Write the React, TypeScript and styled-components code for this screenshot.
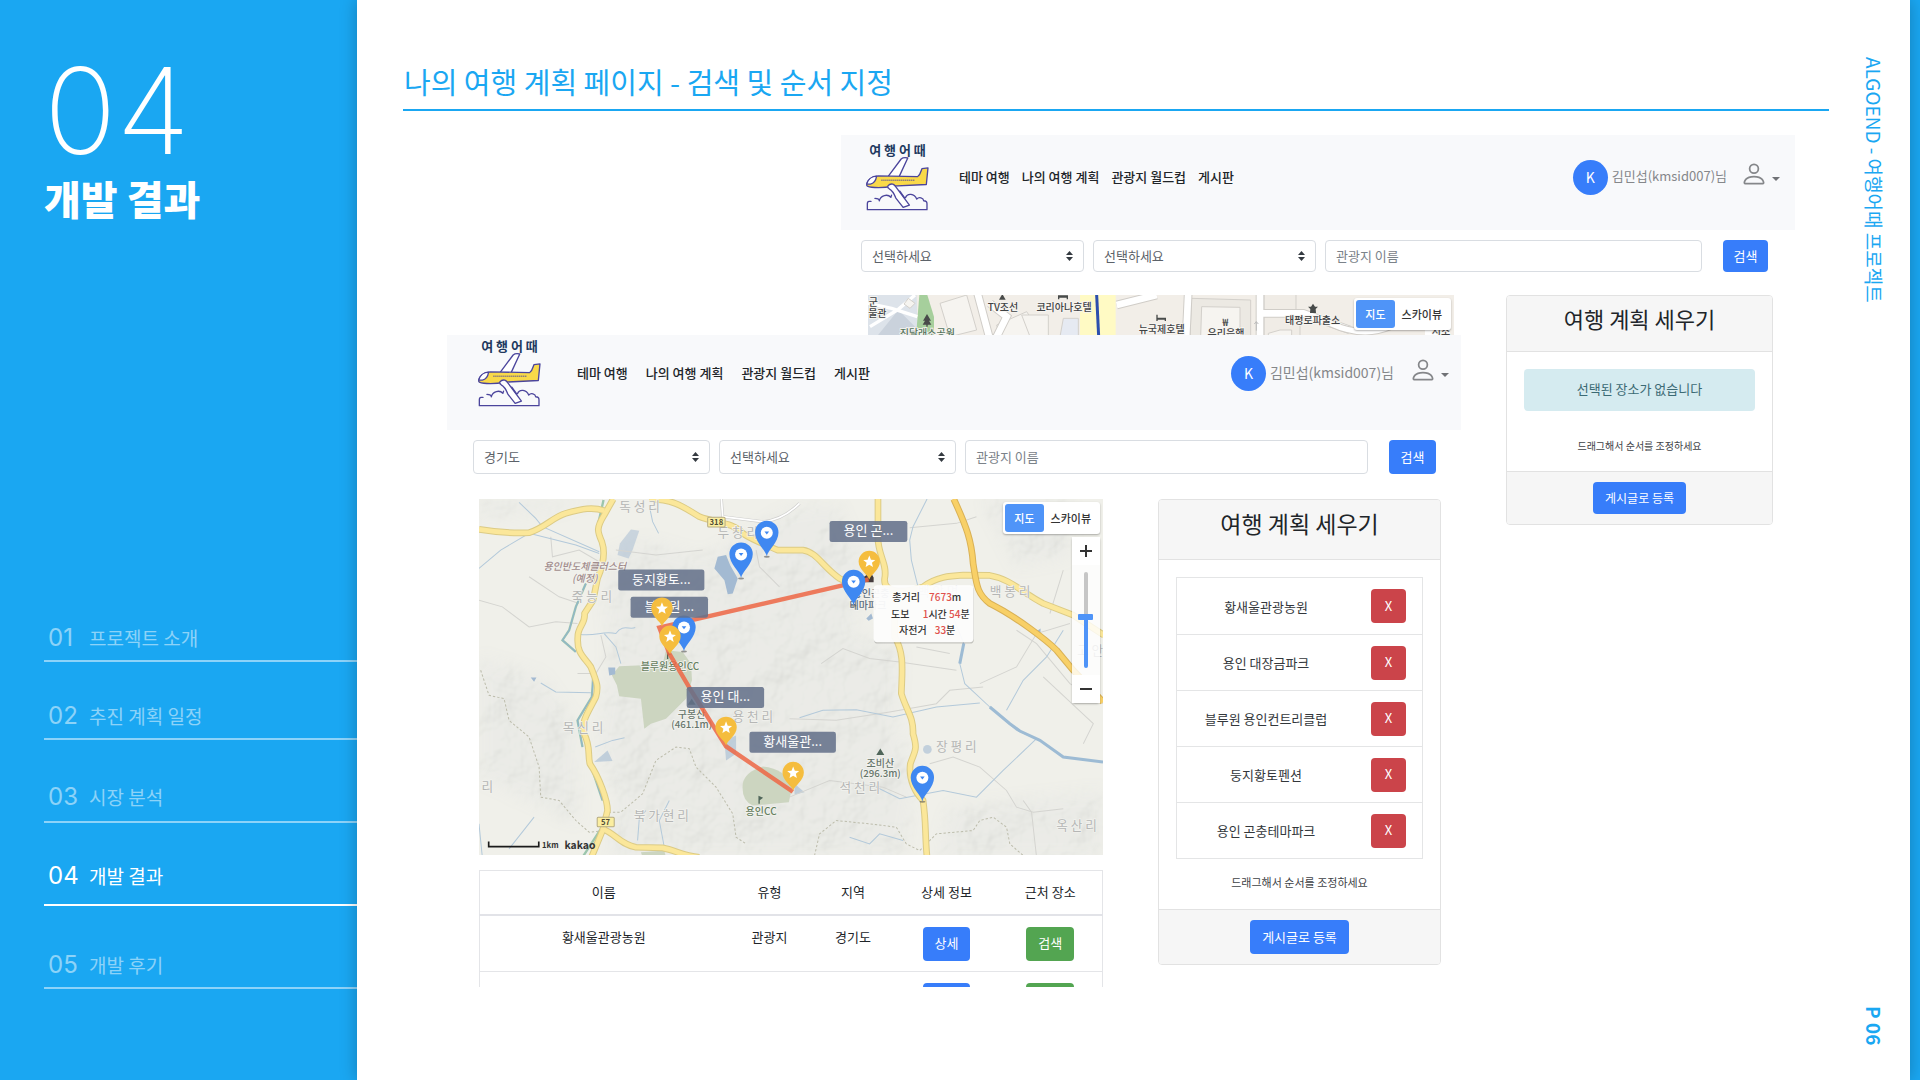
import React from "react";
import styled, { createGlobalStyle } from "styled-components";

const BLUE = "#1aa7f2";
const PRIMARY = "#377dfa";
const SANS = `"Noto Sans CJK KR", "Noto Sans", sans-serif`;
const LATIN = `Inter, "Noto Sans CJK KR", sans-serif`;

const GlobalStyle = createGlobalStyle`
  *, *::before, *::after { box-sizing: border-box; }
  body { margin: 0; background: ${BLUE}; font-family: ${SANS}; color: #212529; }
  h1, h2, h3, p, ul, ol { margin: 0; padding: 0; font-weight: inherit; }
  ul, ol { list-style: none; }
  button, input, select { font-family: inherit; margin: 0; }
  a { color: inherit; text-decoration: none; }
`;

/* ---------- slide frame ---------- */

const Slide = styled.div`
  display: grid;
  grid-template-columns: 357px minmax(0, 1fr);
  min-height: 100vh;
  padding-right: 10px;
  background: ${BLUE};
`;

const Sidebar = styled.aside`
  display: flex;
  flex-direction: column;
  justify-content: space-between;
  padding: 56px 0 91px 44px;
  color: #fff;
`;

const ChapterNumber = styled.p`
  font: 200 120px/110px ${LATIN};
`;

const ChapterTitle = styled.h1`
  font-size: 40px;
  line-height: 64px;
  font-weight: 900;
`;

const Chapters = styled.ol`
  display: flex;
  flex-direction: column;
`;

const Chapter = styled.li<{ $active?: boolean; $height: number; $lift: number }>`
  height: ${(p) => p.$height}px;
  display: flex;
  flex-direction: column;
  justify-content: flex-end;
  border-bottom: 2px solid ${(p) => (p.$active ? "#fff" : "rgba(255, 255, 255, 0.5)")};
  color: ${(p) => (p.$active ? "#fff" : "rgba(255, 255, 255, 0.5)")};
  padding-bottom: ${(p) => p.$lift}px;
`;

const ChapterLink = styled.a`
  display: grid;
  grid-template-columns: 41px 1fr;
  align-items: center;
  padding-left: 4px;
  font-size: 19px;
  line-height: 28px;
`;

const ChapterIndex = styled.span`
  font: 400 24px/28px ${LATIN};
`;

const Main = styled.main`
  display: grid;
  grid-template-columns: minmax(0, 1fr) 81px;
  padding-left: 46px;
  background: #fff;
  box-shadow: 0 0 16px rgba(0, 0, 0, 0.25);
`;

const Content = styled.section`
  display: flex;
  flex-direction: column;
`;

const Heading = styled.h2`
  margin-top: 59px;
  padding-left: 1px;
  height: 52px;
  border-bottom: 2px solid ${BLUE};
  color: ${BLUE};
  font-size: 29px;
  line-height: 44px;
`;

const Rail = styled.div`
  display: flex;
  flex-direction: column;
  justify-content: space-between;
  align-items: center;
  padding: 57px 0 35px 8px;
  color: ${BLUE};
`;

const RailText = styled.span<{ $bold?: boolean }>`
  writing-mode: vertical-rl;
  text-orientation: sideways;
  font-size: 19px;
  line-height: 28px;
  font-weight: ${(p) => (p.$bold ? 700 : 400)};
`;

const Stage = styled.div`
  display: grid;
  grid-template-columns: 44fr 394fr 620fr 334fr 34fr;
  grid-template-rows: 200px auto;
  margin-top: 24px;
`;

/* ---------- captured windows ---------- */

const Win = styled.article<{ $front?: boolean }>`
  grid-column: ${(p) => (p.$front ? "2 / 4" : "3 / 5")};
  grid-row: ${(p) => (p.$front ? "2" : "1 / 3")};
  align-self: start;
  background: #fff;
  z-index: ${(p) => (p.$front ? 1 : 0)};
`;

const NavBar = styled.header<{ $front?: boolean }>`
  display: flex;
  align-items: center;
  height: 95px;
  padding: ${(p) => (p.$front ? "4px 12px 23px 30px" : "8px 15px 19px 24px")};
  background: #f8f9fb;
`;

const Logo = styled.a`
  width: 65px;
  display: flex;
  flex-direction: column;
  align-items: center;
  color: #22395f;
  font-size: 13px;
  line-height: 13px;
  font-weight: 700;
  white-space: nowrap;
`;

const Menu = styled.nav<{ $front?: boolean }>`
  flex: 1;
  display: flex;
  gap: ${(p) => (p.$front ? 18 : 12)}px;
  margin-left: ${(p) => (p.$front ? 35 : 29)}px;
  font-size: 13px;
  line-height: 20px;
  font-weight: 500;
`;

const Avatar = styled.span`
  width: 35px;
  height: 35px;
  border-radius: 50%;
  background: ${PRIMARY};
  color: #fff;
  display: grid;
  place-items: center;
  font-size: 14px;
`;

const UserName = styled.span<{ $front?: boolean }>`
  margin: 0 ${(p) => (p.$front ? 15 : 13)}px 2px 4px;
  color: #85878a;
  font-size: ${(p) => (p.$front ? 14 : 13)}px;
  line-height: 20px;
`;

const UserMenu = styled.button`
  display: flex;
  align-items: center;
  gap: 4px;
  margin-bottom: 6px;
  padding: 0;
  border: 0;
  background: none;
  color: #85878a;
`;

const CaretIcon = styled.svg`
  margin-top: 10px;
`;

const SearchForm = styled.form<{ $front?: boolean }>`
  display: grid;
  grid-template-columns: ${(p) => (p.$front ? "237px 237px 1fr 47px" : "223px 223px 1fr 45px")};
  column-gap: 9px;
  padding: ${(p) => (p.$front ? "10px 25px 0 26px" : "10px 27px 0 20px")};
`;

const Field = styled.label`
  position: relative;
  display: block;
  min-width: 0;
`;

const fieldHeight = (front?: boolean) => (front ? 34 : 32);

const Select = styled.select<{ $front?: boolean }>`
  appearance: none;
  display: block;
  width: 100%;
  height: ${(p) => fieldHeight(p.$front)}px;
  padding: 0 24px 2px 10px;
  border: 1px solid #d9dde2;
  border-radius: 4px;
  background: #fff;
  color: #5c6269;
  font-size: 13px;
`;

const SelectArrows = styled.svg`
  position: absolute;
  right: 11px;
  top: 50%;
  margin-top: -5px;
  pointer-events: none;
`;

const TextInput = styled.input<{ $front?: boolean }>`
  display: block;
  width: 100%;
  height: ${(p) => fieldHeight(p.$front)}px;
  padding: 0 10px 2px;
  border: 1px solid #d9dde2;
  border-radius: 4px;
  font-size: 13px;
  &::placeholder { color: #7b8289; opacity: 1; }
`;

const NameField = styled(Field)`
  margin-right: 12px;
`;

const Button = styled.button<{ $tone?: string; $small?: boolean }>`
  min-width: 35px;
  height: ${(p) => (p.$small ? 32 : 34)}px;
  padding: 0 12px 1px;
  border: 0;
  border-radius: 4px;
  background: ${(p) => p.$tone || PRIMARY};
  color: #fff;
  font-size: ${(p) => (p.$small ? 12 : 13)}px;
  line-height: 20px;
  white-space: nowrap;
`;

const SearchButton = styled(Button)<{ $front?: boolean }>`
  padding: 0;
  height: ${(p) => fieldHeight(p.$front)}px;
`;

const Body = styled.div<{ $front?: boolean }>`
  display: grid;
  grid-template-columns: minmax(0, 1fr) ${(p) => (p.$front ? 283 : 267)}px;
  column-gap: ${(p) => (p.$front ? 55 : 52)}px;
  align-items: start;
  padding: ${(p) => (p.$front ? "25px 20px 0 32px" : "23px 22px 0 27px")};
`;

/* ---------- plan card ---------- */

const Card = styled.section`
  border: 1px solid #e2e2e2;
  border-radius: 4px;
  background: #fff;
  text-align: center;
  overflow: hidden;
`;

const CardTitle = styled.h3<{ $front?: boolean }>`
  height: ${(p) => (p.$front ? 60 : 56)}px;
  padding-top: ${(p) => (p.$front ? 6 : 5)}px;
  border-bottom: 1px solid #e2e2e2;
  background: #f6f6f6;
  font-size: ${(p) => (p.$front ? 23 : 22)}px;
  line-height: 34px;
`;

const CardBody = styled.div`
  padding: 17px 17px 0;
`;

const Notice = styled.p`
  height: 42px;
  border-radius: 4px;
  background: #d5ebf0;
  color: #3b6a74;
  font-size: 13px;
  line-height: 40px;
`;

const Hint = styled.p<{ $front?: boolean }>`
  padding: ${(p) => (p.$front ? "12px 0 16px" : "24px 0 14px")};
  color: #3e4246;
  font-size: ${(p) => (p.$front ? 11 : 10)}px;
  line-height: 22px;
`;

const CardFooter = styled.footer`
  padding: 10px;
  border-top: 1px solid #e2e2e2;
  background: #f6f6f6;
`;

const PlaceList = styled.ul`
  border: 1px solid #e4e5e6;
`;

const Place = styled.li`
  display: grid;
  grid-template-columns: 1fr 67px;
  align-items: center;
  justify-items: center;
  height: 56px;
  font-size: 13px;
  color: #33373b;
  & + & { border-top: 1px solid #e4e5e6; }
`;

/* ---------- results table ---------- */

const TableClip = styled.div`
  max-height: 117px;
  margin-top: 15px;
  overflow: hidden;
`;

const Table = styled.table`
  width: 100%;
  table-layout: fixed;
  border-collapse: collapse;
  border: 1px solid #e4e5e8;
  font-size: 13px;
  line-height: 20px;
  text-align: center;
  th { height: 44px; padding: 0; font-weight: 400; border-bottom: 2px solid #e2e3e8; }
  td { height: 57px; padding: 11px 0 0; vertical-align: top; border-bottom: 1px solid #e4e5e8; }
`;

/* ---------- map ---------- */

const MapBox = styled.div<{ $front?: boolean }>`
  position: relative;
  height: ${(p) => (p.$front ? 356 : 200)}px;
  overflow: hidden;
  background: #eeeee9;
`;

const MapSvg = styled.svg`
  display: block;
  width: 100%;
  height: 100%;
`;

const MapTypes = styled.div`
  position: absolute;
  top: 3px;
  right: 3px;
  display: flex;
  padding: 2px;
  border-radius: 3px;
  background: #fff;
  box-shadow: 0 1px 2px rgba(0, 0, 0, 0.3);
`;

const MapType = styled.button<{ $on?: boolean }>`
  height: 28px;
  padding: 0 ${(p) => (p.$on ? 9 : 7)}px 1px;
  border: 0;
  border-radius: 3px;
  background: ${(p) => (p.$on ? "#4f94f8" : "#fff")};
  color: ${(p) => (p.$on ? "#fff" : "#333")};
  font-size: 11px;
  font-weight: 500;
`;

const ZoomBox = styled.div`
  position: absolute;
  top: 38px;
  right: 3px;
  width: 28px;
  display: flex;
  flex-direction: column;
  align-items: center;
  border-radius: 3px;
  background: rgba(255, 255, 255, 0.8);
  box-shadow: 0 1px 2px rgba(0, 0, 0, 0.3);
`;

const ZoomButton = styled.button`
  width: 28px;
  height: 28px;
  padding: 0;
  border: 0;
  background: #fff;
  display: grid;
  place-items: center;
`;

const ZoomSlider = styled.input`
  appearance: none;
  writing-mode: vertical-lr;
  direction: rtl;
  width: 15px;
  height: 96px;
  margin: 7px 0;
  background: transparent;
  &::-webkit-slider-runnable-track {
    width: 4px;
    border-radius: 2px;
    background: linear-gradient(#c6c6c6 47%, #4f94f8 47%);
  }
  &::-webkit-slider-thumb {
    appearance: none;
    width: 15px;
    height: 6px;
    margin-left: -6px;
    border-radius: 1px;
    background: #4f94f8;
  }
`;

/* ---------- drawings ---------- */

const Plane = () => (
  <svg width="65" height="55" viewBox="104 77 194 166" fill="none" stroke="#4b459c" strokeWidth="4" strokeLinejoin="round" strokeLinecap="round">
    <path d="M174 137 L212 86 Q219 80 232 83 L207 137" fill="#fff" />
    <path d="M108 165 C108 150 124 138 142 137 L262 139 C271 134 271 122 275 115 L293 113 L288 163 L186 168 C160 174 124 174 110 168 Z" fill="#f9d949" />
    <path d="M108 162 C112 148 124 138 138 138 C136 150 130 160 119 162 Z" fill="#fff" />
    <path d="M152 150 H252" strokeWidth="3" strokeDasharray="4 2" strokeLinecap="butt" />
    <path d="M121 214 H115 Q110 214 110 221 V239 H290 V221 Q290 212 280 212 C279 203 266 199 259 207 C252 190 231 188 225 203" />
    <path d="M133 205 C140 205 146 207 146 212 C150 196 171 190 181 202 L183 195" />
    <path d="M172 167 Q178 160 187 162 Q192 164 196 170 L237 225 L218 232 L196 204 Q188 182 176 176 Q170 172 172 167 Z" fill="#fff" />
    <path d="M208 183 L222 203" />
  </svg>
);

const PersonIcon = () => (
  <svg width="28" height="28" viewBox="0 0 16 16" fill="currentColor" aria-hidden="true">
    <path d="M8 8a3 3 0 1 0 0-6 3 3 0 0 0 0 6m2-3a2 2 0 1 1-4 0 2 2 0 0 1 4 0m4 8c0 1-1 1-1 1H3s-1 0-1-1 1-4 6-4 6 3 6 4m-1-.004c-.001-.246-.154-.986-.832-1.664C11.516 10.68 10.289 10 8 10s-3.516.68-4.168 1.332c-.678.678-.83 1.418-.832 1.664z" />
  </svg>
);

const Caret = () => (
  <CaretIcon width="8" height="4" viewBox="0 0 8 4" fill="#707276" aria-hidden="true">
    <path d="M0 0H8L4 4Z" />
  </CaretIcon>
);

const villages: [number, number, string][] = [
  [511, 64, "독 성 리"], [805, 141, "두 창 리"], [368, 334, "죽 능 리"], [342, 725, "목 신 리"], [55, 903, "리"],
  [576, 987, "북 가 현 리"], [850, 692, "용 천 리"], [1171, 904, "석 천 리"], [1460, 783, "장 평 리"],
  [1621, 319, "백 봉 리"], [1405, 319, "백 암 면"], [1820, 1017, "옥 산 리"], [1860, 494, "고 안"],
];

const bluePins: [number, number][] = [[892, 198], [815, 263], [644, 482], [1152, 345], [1358, 932]];
const starPins: [number, number][] = [[578, 408], [602, 492], [770, 765], [971, 900], [1199, 268]];
const chips: [number, number, number, string][] = [
  [447, 238, 258, "둥지황토..."], [484, 320, 232, "블루원 ..."], [652, 590, 232, "용인 대..."],
  [840, 724, 259, "황새울관..."], [1080, 93, 233, "용인 곤..."],
];

const yellowRoads = [
  "M30 118 C90 128 130 130 180 128 C230 112 250 82 290 70 C340 56 370 50 405 62",
  "M432 27 L405 75 C380 115 385 125 398 155 C410 190 400 230 385 265 L372 330 L346 370 C350 400 325 410 326 440 C322 490 345 500 365 530 C385 580 388 590 380 620 C355 670 336 690 345 730 C365 770 355 790 362 820 C390 860 415 930 415 960 L400 1020 L366 1102",
  "M400 1015 C440 1030 450 1060 500 1070 L580 1072 C620 1080 640 1095 690 1100",
  "M540 27 C620 30 640 50 690 80 C740 100 790 95 820 130 C850 150 890 165 925 180 L1000 180 C1040 185 1060 230 1110 265 L1170 295",
  "M1225 27 V130 C1220 190 1255 220 1245 265 C1240 310 1300 310 1360 290 C1400 260 1440 257 1480 255 L1560 256 C1620 265 1660 310 1720 340 L1810 375 L1902 435",
  "M1275 380 V440 C1305 490 1297 540 1295 610 C1310 660 1332 680 1330 730 C1345 780 1335 780 1322 820 C1315 870 1340 910 1360 930 C1370 1000 1365 1030 1372 1100",
];

const streams = [
  "M30 235 L95 180 L180 130 L320 165 L390 190",
  "M150 37 L200 85 L220 110 L390 185",
  "M330 432 C380 440 400 420 440 430 C460 400 480 420 498 412",
  "M405 430 L440 470 L455 520",
  "M215 578 L260 605 L365 607",
  "M378 770 L430 750 L466 742",
  "M540 47 L550 95 L568 130",
  "M1372 27 L1330 110 L1320 150 L1325 210 L1345 290 M1450 380 L1482 460 L1470 520 L1485 580 L1560 650 L1640 720 L1710 750 L1780 800 L1899 815",
  "M990 682 L1060 660 L1160 658 L1270 680 L1400 650 L1530 638",
  "M1200 880 L1290 925 L1420 900 L1520 920 L1600 840 L1700 745",
  "M1610 660 L1660 570 L1730 500 L1780 420",
  "M30 1000 L40 1100 M120 1075 L195 980",
  "M505 1050 L510 985 L530 960 M585 1070 L570 990 L600 930",
  "M1140 1040 L1200 1060 L1230 1030 L1300 1050",
];

const lanes = [
  "M30 330 L100 350 L180 410 L260 395 L325 400",
  "M245 140 L250 200 L330 180 L390 215 M180 260 L270 320 L330 340",
  "M395 435 L410 500 L380 550 L325 550",
  "M440 180 L560 195 L700 180 M860 180 L870 230 L930 290",
  "M1320 113 L1460 100 L1520 80 M1490 120 L1510 200",
  "M1055 520 L1120 475 L1200 505 L1290 515 L1460 540",
  "M1340 470 L1440 490 M1530 580 L1640 530 L1700 430 L1800 400",
  "M960 685 L1100 690 L1260 665 L1400 640 L1440 600 L1540 590",
  "M1380 820 L1450 800 L1530 830 L1610 900 L1640 950 L1690 965 L1780 955",
  "M960 920 L1080 870 L1240 890 L1310 920 M1660 930 L1685 965 L1700 1100",
  "M1780 240 L1740 370 M1640 420 L1700 460 L1800 580 L1899 640",
  "M1720 560 L1870 700 L1840 760",
];

const RouteMap = () => (
  <MapSvg viewBox="30 27 1869 1070" preserveAspectRatio="xMinYMin slice" fontFamily={`"Noto Sans CJK KR", sans-serif`} role="img" aria-label="여행 경로 지도">
    <defs>
      <filter id="relief" x="0" y="0" width="100%" height="100%">
        <feTurbulence type="fractalNoise" baseFrequency="0.008" numOctaves="4" seed="7" result="n" />
        <feDiffuseLighting in="n" surfaceScale="34" diffuseConstant="1.1" lightingColor="#fff">
          <feDistantLight azimuth="225" elevation="58" />
        </feDiffuseLighting>
      </filter>
      <filter id="soft"><feGaussianBlur stdDeviation="22" /></filter>
      <mask id="hills">
        <g fill="#fff" filter="url(#soft)">
          <path d="M400 200 L520 150 L700 200 L960 60 L1100 40 L1200 250 L1150 420 L1290 480 L1280 700 L1340 860 L1300 1100 L420 1100 L440 930 L380 760 L420 500 Z" />
          <path d="M30 500 L220 560 L320 700 L330 1000 L30 860 Z" />
          <path d="M1440 950 L1900 900 V1100 H1400 Z" />
          <path d="M1540 27 H1800 V200 L1640 230 Z" />
          <path d="M30 27 H380 L260 60 L30 90 Z" />
        </g>
      </mask>
    </defs>
    <rect x="30" y="27" width="1869" height="1071" fill="#f0f0ea" />
    <g mask="url(#hills)">
      <rect x="30" y="27" width="1869" height="1071" fill="#e9eae5" />
      <rect x="30" y="27" width="1869" height="1071" filter="url(#relief)" opacity="0.09" />
    </g>
    <g fill="#ccd5c0">
      <path d="M428 555 L450 528 L520 525 L580 520 L590 480 L640 485 L665 520 L668 570 L650 625 L590 685 L545 700 L525 715 L515 625 L450 618 L443 585 Z" />
      <path d="M820 880 Q825 845 880 828 Q950 835 968 890 L958 935 L850 945 Q815 930 820 880 Z" />
      <path d="M515 1085 L585 1080 L590 1100 H520 Z" />
    </g>
    <g fill="#a3bad2">
      <path d="M735 235 L745 200 L770 195 L782 225 L805 265 L790 310 L775 312 L765 270 Z" />
      <path d="M452 160 L485 118 L510 122 L490 180 L478 205 L445 195 Z" opacity="0.5" />
      <path d="M417 532 H438 V552 L420 556 Z M185 562 H202 L195 574 Z" />
      <path d="M765 750 L800 735 L800 790 L770 810 Z M975 880 L1005 905 L975 912 Z M375 815 L415 780 L430 812 Z" opacity="0.6" />
      <circle cx="1373" cy="777" r="13" opacity="0.6" />
      <path d="M1190 385 L1205 370 L1210 385 L1197 392 Z M1697 425 L1712 415 L1712 440 Z" />
    </g>
    <g fill="none" stroke="#d4d4d0" strokeWidth="3">
      {lanes.map((d) => <path key={d} d={d} />)}
    </g>
    <path d="M990 40 Q940 90 880 95 L760 80 L756 27" fill="none" stroke="#cfcfcd" strokeWidth="9" />
    <path d="M990 40 Q940 90 880 95 L760 80 L756 27" fill="none" stroke="#fff" strokeWidth="5" />
    <g fill="none" stroke="#b3c9da" strokeWidth="3">
      {streams.map((d) => <path key={d} d={d} />)}
    </g>
    <path d="M1560 650 L1620 700 L1650 722 L1710 750 L1780 800 L1899 815 M1482 460 L1470 520" fill="none" stroke="#9dbbd4" strokeWidth="9" />
    <path d="M403 30 L385 110 M350 280 L320 350 L300 420 L280 450 L320 485 M372 560 L368 620 L325 690 L340 770 M370 840 L400 930 M395 1015 L340 1100" fill="none" stroke="#9cc6ad" strokeWidth="7" />
    <path d="M350 280 L320 350 L300 420 L280 450 L320 485 M372 560 L368 620 L325 690 L340 770 M370 840 L400 930" fill="none" stroke="#8fb2cf" strokeWidth="3" />
    <path d="M35 540 L60 615 L105 625 L120 690 L180 740 L210 830 L215 920 L270 930 L320 990 L360 1025 L410 1020 M405 965 L455 965 L520 910 L560 810 L620 770 L660 775 L680 830 L740 890 L790 970 L800 1040 L830 1060 M1035 1095 L1050 1030 L1100 990 L1200 1000 L1280 1010 L1310 1060 L1350 1080 L1400 1030 L1510 1020 L1530 990 L1570 980 L1610 1010 L1620 1060 L1660 1095" fill="none" stroke="#bcbcab" strokeWidth="3" strokeDasharray="7 6" />
    <g fill="none" strokeLinejoin="round">
      {yellowRoads.map((d) => <path key={d} d={d} stroke="#dccb85" strokeWidth="20" />)}
      {yellowRoads.map((d) => <path key={d} d={d} stroke="#fbe79a" strokeWidth="14" />)}
      <path d="M1452 27 C1490 110 1505 150 1510 220 C1520 280 1520 310 1560 340 C1640 380 1730 450 1760 480 L1810 540 L1899 635" stroke="#d9b156" strokeWidth="20" />
      <path d="M1452 27 C1490 110 1505 150 1510 220 C1520 280 1520 310 1560 340 C1640 380 1730 450 1760 480 L1810 540 L1899 635" stroke="#f8d067" strokeWidth="14" />
    </g>

    <g fontSize="38" fill="#b5b6b5" textAnchor="middle" stroke="#f3f3ef" strokeWidth="4" paintOrder="stroke">
      {villages.map(([x, y, t]) => <text key={t} x={x} y={y}>{t}</text>)}
    </g>
    <g fontSize="30" textAnchor="middle" stroke="#f3f3ef" strokeWidth="5" paintOrder="stroke">
      <g fill="#a18c8c" fontStyle="italic" fontWeight="500">
        <text x="347" y="240">용인반도체클러스터</text>
        <text x="347" y="275">(예정)</text>
      </g>
      <g fill="#66805f" fontWeight="500">
        <text x="602" y="540">블루원용인CC</text>
        <text x="875" y="974">용인CC</text>
      </g>
      <g fill="#65746a" fontWeight="500">
        <text x="667" y="683">구봉산</text>
        <text x="667" y="714" fontSize="29">(461.1m)</text>
        <text x="1232" y="829">조비산</text>
        <text x="1232" y="861" fontSize="29">(296.3m)</text>
      </g>
      <g fill="#5e6f80" fontWeight="500">
        <text x="1204" y="322">용인곤충</text>
        <text x="1195" y="357">테마파크</text>
      </g>
    </g>
    <path d="M1220 794 L1232 774 L1244 794 Z M655 643 L667 625 L679 643 Z M867 916 L881 922 L871 929 V940 H867 Z M593 485 L606 491 L597 496 V506 H593 Z" fill="#50665a" />
    <path d="M1180 262 l12 -8 6 8 8 -10 6 10 v14 h-30 z" fill="#443b3b" />

    <g fill="#fbeea0" stroke="#b5aa80" strokeWidth="3">
      <rect x="715" y="82" width="52" height="29" rx="3" />
      <rect x="384" y="980" width="51" height="29" rx="3" />
    </g>
    <g fontSize="23" fontWeight="700" fill="#4f4b35" textAnchor="middle">
      <text x="741" y="105">318</text>
      <text x="409" y="1003">57</text>
    </g>

    <path d="M1197 268 L570 412 L600 490 L665 600 L770 768 L970 904" fill="none" stroke="#ed6644" strokeWidth="13" strokeOpacity="0.85" />

    {bluePins.map(([x, y]) => (
      <g key={`${x}-${y}`} transform={`translate(${x} ${y})`}>
        <ellipse cx="0" cy="2" rx="9" ry="3" fill="#555" opacity="0.6" />
        <path d="M0 0 C-4 -18 -35 -42 -35 -71 A35 35 0 0 1 35 -71 C35 -42 4 -18 0 0 Z" fill="#3f88f1" />
        <circle cy="-70" r="18" fill="#fff" />
        <path d="M-7 -74 H7 L0 -65 Z" fill="#3f88f1" />
      </g>
    ))}

    {chips.map(([x, y, w, t]) => (
      <g key={t}>
        <rect x={x} y={y} width={w} height="63" rx="7" fill="#64718a" fillOpacity="0.87" />
        <text x={x + w / 2} y={y + 43} fontSize="39" fill="#fff" textAnchor="middle">{t}</text>
      </g>
    ))}

    {starPins.map(([x, y]) => (
      <g key={`${x}-${y}`} transform={`translate(${x} ${y})`}>
        <path d="M0 0 C-4 -14 -32 -30 -32 -54 A32 32 0 0 1 32 -54 C32 -30 4 -14 0 0 Z" fill="#f5bd3e" />
        <path d="M0 -72 L5 -59 L18 -58 L8 -50 L11 -37 L0 -44 L-11 -37 L-8 -50 L-18 -58 L-5 -59 Z" fill="#fff" />
      </g>
    ))}

    <rect x="1213" y="288" width="299" height="172" rx="11" fill="#000" fillOpacity="0.18" />
    <rect x="1212" y="285" width="299" height="171" rx="11" fill="#fff" fillOpacity="0.94" />
    <g fontSize="30" fill="#333" fontWeight="500">
      <text x="1268" y="334">총거리</text>
      <text x="1378" y="334"><tspan fill="#e0524d">7673</tspan>m</text>
      <text x="1264" y="382">도보</text>
      <text x="1359" y="382"><tspan fill="#e0524d">1</tspan>시간 <tspan fill="#e0524d">54</tspan>분</text>
      <text x="1288" y="430">자전거</text>
      <text x="1395" y="430"><tspan fill="#e0524d">33</tspan>분</text>
    </g>

    <path d="M59 1053 V1068 H209 V1053" fill="none" stroke="#1b1b1b" strokeWidth="5" />
    <text x="219" y="1073" fontSize="23" fontWeight="700" fill="#333">1km</text>
    <text x="286" y="1074" fontSize="31" fontWeight="700" fill="#333">kakao</text>
  </MapSvg>
);

const CityMap = () => (
  <MapSvg viewBox="114 495 1758 600" preserveAspectRatio="xMinYMin slice" fontFamily={`"Noto Sans CJK KR", sans-serif`} role="img" aria-label="도심 지도">
    <rect x="114" y="495" width="1758" height="600" fill="#f2eee8" />
    <path d="M114 495 H260 L262 570 L320 620 H114 Z" fill="#dde3ea" />
    <path d="M140 620 L205 540 L285 620 Z" fill="#cad2dc" />
    <path d="M268 495 H292 L312 560 V620 H258 Z" fill="#a6cf9c" />
    <path d="M114 520 L185 535 L262 560 M120 590 L205 538 L255 495" fill="none" stroke="#fff" strokeWidth="10" />
    <g fill="#f6f4f0" stroke="#d3d0cb" strokeWidth="3">
      <path d="M330 520 L410 495 L440 600 L360 620 Z" />
      <path d="M500 585 L590 545 L640 620 H510 Z" />
      <path d="M575 555 H655 V620 H600 Z" />
      <path d="M700 565 H745 V620 H690 Z" fill="#e6eaf2" />
      <path d="M1085 505 L1262 510 V620 H1080 Z" fill="#ece9e3" />
      <path d="M1115 530 L1230 532 V620 H1112 Z" />
      <path d="M1302 480 H1398 V548 L1302 540 Z" fill="#f0ece6" />
      <path d="M1302 560 L1410 556 V620 H1302 Z" fill="#f0ece6" />
      <path d="M1315 610 L1350 600 L1385 600 V620 H1315 Z" />
      <path d="M222 522 L235 505 L255 520 L240 535 Z" />
    </g>
    <path d="M440 480 L480 630 M480 520 L530 560 L500 620 M1075 480 L1068 630 M860 525 L980 495 M1290 480 V630 M1295 550 L1420 550 L1560 600" fill="none" stroke="#d0cdc8" strokeWidth="26" />
    <path d="M440 480 L480 630 M480 520 L530 560 L500 620 M1075 480 L1068 630 M860 525 L980 495 M1290 480 V630 M1295 550 L1420 550 L1560 600" fill="none" stroke="#fff" strokeWidth="20" />
    <path d="M1500 580 Q1600 625 1680 590 L1740 560" fill="none" stroke="#d0cdc8" strokeWidth="22" />
    <path d="M1500 580 Q1600 625 1680 590 L1740 560" fill="none" stroke="#fff" strokeWidth="16" />
    <path d="M750 495 H857 V620 H750 Z" fill="#fffac4" />
    <path d="M800 495 L806 620" stroke="#2c4fae" strokeWidth="9" />
    <path d="M1279 575 V602 M1273 582 L1279 575 L1285 582" fill="none" stroke="#bbb" strokeWidth="3" />
    <rect x="1785" y="580" width="75" height="50" fill="#fff" />
    <g fill="#484b4a">
      <path d="M291 552 L303 572 H297 L304 584 H293 V590 H289 V584 H278 L285 572 H279 Z" />
      <path d="M517 492 L527 509 H507 Z" />
      <path d="M684 496 H714 V508 H710 V503 H688 V508 H684 Z" />
      <path d="M979 554 H983 V563 H1008 V573 H1004 V569 H983 V573 H979 Z" />
      <path d="M1434 530 H1443 L1449 521 L1455 530 H1464 L1457 537 L1458 549 H1440 L1441 537 Z" />
    </g>
    <g fontSize="30" fontWeight="500" fill="#3f4244" stroke="#f7f5f1" strokeWidth="5" paintOrder="stroke" textAnchor="middle">
      <text x="130" y="529">군</text>
      <text x="142" y="562">물관</text>
      <text x="292" y="621" fill="#53725b">진달래소공원</text>
      <text x="519" y="543">TV조선</text>
      <text x="702" y="543">코리아나호텔</text>
      <text x="995" y="608">뉴국제호텔</text>
      <text x="1186" y="588">₩</text>
      <text x="1188" y="621">우리은행</text>
      <text x="1448" y="582">태평로파출소</text>
      <text x="1833" y="616">서소</text>
    </g>
  </MapSvg>
);

/* ---------- composed parts ---------- */

const MapTypeSwitch = () => (
  <MapTypes>
    <MapType type="button" $on>지도</MapType>
    <MapType type="button">스카이뷰</MapType>
  </MapTypes>
);

const SiteHeader = ({ front }: { front?: boolean }) => (
  <NavBar $front={front}>
    <Logo href="#">
      <span>여 행 어 때</span>
      <Plane />
    </Logo>
    <Menu $front={front}>
      <a href="#">테마 여행</a>
      <a href="#">나의 여행 계획</a>
      <a href="#">관광지 월드컵</a>
      <a href="#">게시판</a>
    </Menu>
    <Avatar>K</Avatar>
    <UserName $front={front}>김민섭(kmsid007)님</UserName>
    <UserMenu type="button" aria-label="사용자 메뉴">
      <PersonIcon />
      <Caret />
    </UserMenu>
  </NavBar>
);

const SelectField = ({ value, label, front }: { value: string; label: string; front?: boolean }) => (
  <Field>
    <Select $front={front} aria-label={label} defaultValue={value}>
      <option>{value}</option>
    </Select>
    <SelectArrows width="7" height="10" viewBox="0 0 7 10" fill="#343a40">
      <path d="M0 4 L3.5 0 L7 4 Z M0 6 L3.5 10 L7 6 Z" />
    </SelectArrows>
  </Field>
);

const Search = ({ region, front }: { region: string; front?: boolean }) => (
  <SearchForm $front={front} onSubmit={(e) => e.preventDefault()}>
    <SelectField value={region} label="지역" front={front} />
    <SelectField value="선택하세요" label="유형" front={front} />
    <NameField>
      <TextInput $front={front} type="text" placeholder="관광지 이름" aria-label="관광지 이름" />
    </NameField>
    <SearchButton $front={front}>검색</SearchButton>
  </SearchForm>
);

const PlanCard = ({ front, children }: { front?: boolean; children: React.ReactNode }) => (
  <Card>
    <CardTitle $front={front}>여행 계획 세우기</CardTitle>
    <CardBody>
      {children}
      <Hint $front={front}>드래그해서 순서를 조정하세요</Hint>
    </CardBody>
    <CardFooter>
      <Button type="button" $small={!front}>게시글로 등록</Button>
    </CardFooter>
  </Card>
);

const chapters = [
  { name: "프로젝트 소개", height: 83, lift: 8 },
  { name: "추진 계획 일정", height: 78, lift: 8 },
  { name: "시장 분석", height: 83, lift: 10 },
  { name: "개발 결과", height: 83, lift: 14, active: true },
  { name: "개발 후기", height: 83, lift: 8 },
];
const places = ["황새울관광농원", "용인 대장금파크", "블루원 용인컨트리클럽", "둥지황토펜션", "용인 곤충테마파크"];

export default function App() {
  return (
    <Slide>
      <GlobalStyle />
      <Sidebar>
        <div>
          <ChapterNumber>04</ChapterNumber>
          <ChapterTitle>개발 결과</ChapterTitle>
        </div>
        <Chapters>
          {chapters.map((c, i) => (
            <Chapter key={c.name} $active={c.active} $height={c.height} $lift={c.lift}>
              <ChapterLink href="#">
                <ChapterIndex>{`0${i + 1}`}</ChapterIndex>
                {c.name}
              </ChapterLink>
            </Chapter>
          ))}
        </Chapters>
      </Sidebar>
      <Main>
        <Content>
          <Heading>나의 여행 계획 페이지 - 검색 및 순서 지정</Heading>
          <Stage>
            <Win>
              <SiteHeader />
              <Search region="선택하세요" />
              <Body>
                <MapBox>
                  <CityMap />
                  <MapTypeSwitch />
                </MapBox>
                <PlanCard>
                  <Notice>선택된 장소가 없습니다</Notice>
                </PlanCard>
              </Body>
            </Win>
            <Win $front>
              <SiteHeader front />
              <Search region="경기도" front />
              <Body $front>
                <div>
                  <MapBox $front>
                    <RouteMap />
                    <MapTypeSwitch />
                    <ZoomBox>
                      <ZoomButton type="button" aria-label="확대">
                        <svg width="12" height="12" viewBox="0 0 12 12" stroke="#333" strokeWidth="2"><path d="M6 0V12M0 6H12" /></svg>
                      </ZoomButton>
                      <ZoomSlider type="range" min="0" max="100" defaultValue="53" aria-label="지도 확대 수준" />
                      <ZoomButton type="button" aria-label="축소">
                        <svg width="12" height="12" viewBox="0 0 12 12" stroke="#333" strokeWidth="2"><path d="M0 6H12" /></svg>
                      </ZoomButton>
                    </ZoomBox>
                  </MapBox>
                  <TableClip>
                    <Table>
                      <colgroup>
                        <col />
                        <col width="84" />
                        <col width="83" />
                        <col width="104" />
                        <col width="104" />
                      </colgroup>
                      <thead>
                        <tr><th>이름</th><th>유형</th><th>지역</th><th>상세 정보</th><th>근처 장소</th></tr>
                      </thead>
                      <tbody>
                        <tr>
                          <td>황새울관광농원</td>
                          <td>관광지</td>
                          <td>경기도</td>
                          <td><Button type="button">상세</Button></td>
                          <td><Button type="button" $tone="#53a551">검색</Button></td>
                        </tr>
                        <tr>
                          <td />
                          <td />
                          <td />
                          <td><Button type="button">상세</Button></td>
                          <td><Button type="button" $tone="#53a551">검색</Button></td>
                        </tr>
                      </tbody>
                    </Table>
                  </TableClip>
                </div>
                <PlanCard front>
                  <PlaceList>
                    {places.map((name) => (
                      <Place key={name}>
                        {name}
                        <Button type="button" $tone="#cb444a" aria-label={`${name} 삭제`}>X</Button>
                      </Place>
                    ))}
                  </PlaceList>
                </PlanCard>
              </Body>
            </Win>
          </Stage>
        </Content>
        <Rail>
          <RailText>ALGOEND - 여행어때 프로젝트</RailText>
          <RailText $bold>P 06</RailText>
        </Rail>
      </Main>
    </Slide>
  );
}
